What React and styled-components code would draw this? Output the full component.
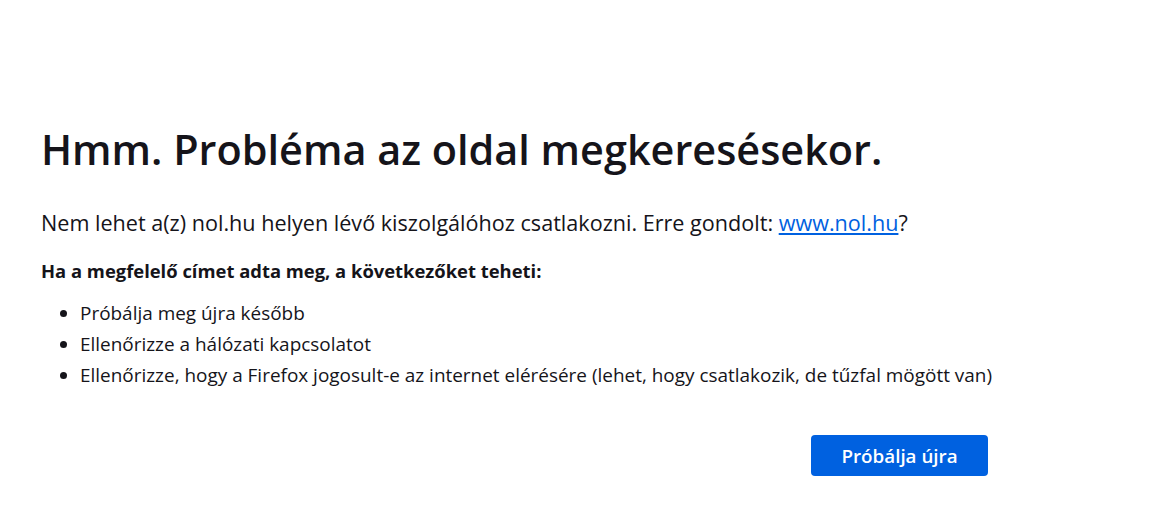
import React from "react";
import styled, { createGlobalStyle } from "styled-components";

const Global = createGlobalStyle`
  html, body { margin: 0; padding: 0; background: #fff; }
  body { font-family: "Open Sans", "Noto Sans", sans-serif; color: #15141a; }
`;

const Page = styled.main`
  padding: 124px 0 0 41px;
`;

const Container = styled.div`
  width: 947px;
  display: flex;
  flex-direction: column;
`;

const Title = styled.h1`
  margin: 0;
  font-size: 41.4px;
  line-height: 50px;
  font-weight: 600;
`;

const Intro = styled.p`
  margin: 34px 0 0;
  font-size: 21.6px;
  line-height: 30px;
  font-weight: 400;
`;

const Link = styled.a`
  color: #0061e0;
  text-decoration: underline;
`;

const Lead = styled.p`
  margin: 20px 0 0;
  font-size: 18.4px;
  line-height: 26px;
  font-weight: 700;
`;

const List = styled.ul`
  margin: 14px 0 0;
  padding-left: 39px;
`;

const Item = styled.li`
  font-size: 18.95px;
  line-height: 31px;
  white-space: nowrap;
`;

const Actions = styled.div`
  display: flex;
  justify-content: flex-end;
  margin-top: 44px;
`;

const Button = styled.button`
  width: 177px;
  height: 41px;
  border: none;
  border-radius: 4px;
  background: #0061e0;
  color: #fff;
  font-family: inherit;
  font-size: 18.8px;
  font-weight: 600;
  cursor: pointer;
`;

export default function App() {
  return (
    <>
      <Global />
      <Page>
        <Container>
          <Title>Hmm. Probléma az oldal megkeresésekor.</Title>
          <Intro>
            Nem lehet a(z) nol.hu helyen lévő kiszolgálóhoz csatlakozni. Erre gondolt:{" "}
            <Link href="#">www.nol.hu</Link>?
          </Intro>
          <Lead>Ha a megfelelő címet adta meg, a következőket teheti:</Lead>
          <List>
            <Item>Próbálja meg újra később</Item>
            <Item>Ellenőrizze a hálózati kapcsolatot</Item>
            <Item>
              Ellenőrizze, hogy a Firefox jogosult-e az internet elérésére (lehet, hogy csatlakozik, de tűzfal mögött van)
            </Item>
          </List>
          <Actions>
            <Button>Próbálja újra</Button>
          </Actions>
        </Container>
      </Page>
    </>
  );
}
